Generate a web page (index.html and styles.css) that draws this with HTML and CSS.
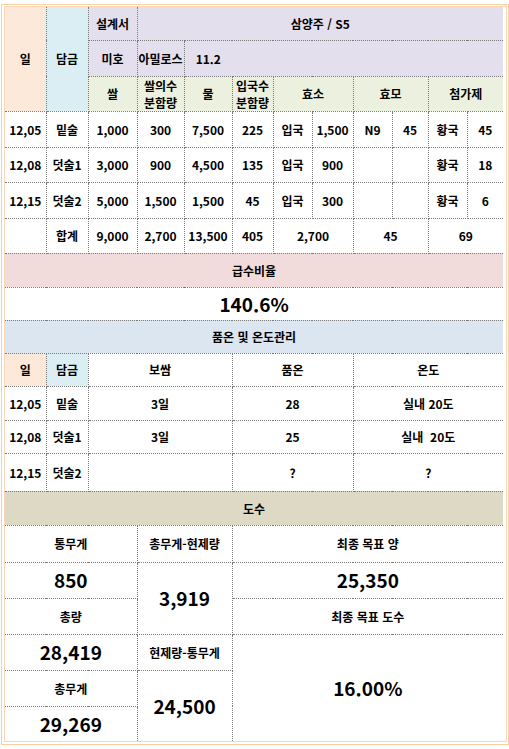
FILE: index.html
```html
<!DOCTYPE html>
<html lang="ko">
<head>
  <meta charset="UTF-8">
  <meta name="viewport" content="width=device-width, initial-scale=1.0">
  <title>삼양주 S5 담금 기록</title>
  <link rel="stylesheet" href="styles.css">
</head>
<body>
  <div class="frame">
    <div class="sheet-wrap">
      <table class="sheet">
        <colgroup>
          <col><col><col><col><col><col><col><col><col><col><col><col>
        </colgroup>

        <!-- 설계서 -->
        <tr class="h33">
          <td rowspan="3" class="peach">일</td>
          <td rowspan="3" class="aqua">담금</td>
          <td class="lav">설계서</td>
          <td colspan="9" class="lav">삼양주 / S5</td>
        </tr>
        <tr class="h36">
          <td class="lav">미호</td>
          <td class="lav">아밀로스</td>
          <td class="lav">11.2</td>
          <td colspan="7" class="lav no-left"></td>
        </tr>
        <tr class="h35">
          <td class="green">쌀</td>
          <td class="green">쌀의수<br>분함량</td>
          <td class="green">물</td>
          <td class="green">입국수<br>분함량</td>
          <td colspan="2" class="green">효소</td>
          <td colspan="2" class="green">효모</td>
          <td colspan="2" class="green">첨가제</td>
        </tr>
        <tr class="h36">
          <td>12,05</td><td>밑술</td><td>1,000</td><td>300</td><td>7,500</td><td>225</td>
          <td>입국</td><td>1,500</td><td>N9</td><td>45</td><td>황국</td><td>45</td>
        </tr>
        <tr class="h35">
          <td>12,08</td><td>덧술1</td><td>3,000</td><td>900</td><td>4,500</td><td>135</td>
          <td>입국</td><td>900</td><td></td><td></td><td>황국</td><td>18</td>
        </tr>
        <tr class="h36">
          <td>12,15</td><td>덧술2</td><td>5,000</td><td>1,500</td><td>1,500</td><td>45</td>
          <td>입국</td><td>300</td><td></td><td></td><td>황국</td><td>6</td>
        </tr>
        <tr class="h35">
          <td></td><td>합계</td><td>9,000</td><td>2,700</td><td>13,500</td><td>405</td>
          <td colspan="2">2,700</td><td colspan="2">45</td><td colspan="2">69</td>
        </tr>

        <!-- 급수비율 -->
        <tr class="h34">
          <td colspan="12" class="pink">급수비율</td>
        </tr>
        <tr class="h33">
          <td colspan="12" class="big">140.6%</td>
        </tr>

        <!-- 품온 및 온도관리 -->
        <tr class="h33">
          <td colspan="12" class="blue">품온 및 온도관리</td>
        </tr>
        <tr class="h33">
          <td class="peach">일</td>
          <td class="aqua">담금</td>
          <td colspan="3">보쌈</td>
          <td colspan="3">품온</td>
          <td colspan="4">온도</td>
        </tr>
        <tr class="h34">
          <td>12,05</td><td>밑술</td><td colspan="3">3일</td><td colspan="3">28</td><td colspan="4">실내 20도</td>
        </tr>
        <tr class="h33">
          <td>12,08</td><td>덧술1</td><td colspan="3">3일</td><td colspan="3">25</td><td colspan="4">실내&nbsp; 20도</td>
        </tr>
        <tr class="h38">
          <td>12,15</td><td>덧술2</td><td colspan="3"></td><td colspan="3">?</td><td colspan="4">?</td>
        </tr>

        <!-- 도수 -->
        <tr class="h34">
          <td colspan="12" class="tan">도수</td>
        </tr>
        <tr class="h37">
          <td colspan="3">통무게</td>
          <td colspan="2">총무게-현제량</td>
          <td colspan="7">최종 목표 양</td>
        </tr>
        <tr class="h36">
          <td colspan="3" class="big">850</td>
          <td colspan="2" rowspan="2" class="big">3,919</td>
          <td colspan="7" class="big">25,350</td>
        </tr>
        <tr class="h36">
          <td colspan="3">총량</td>
          <td colspan="7">최종 목표 도수</td>
        </tr>
        <tr class="h36">
          <td colspan="3" class="big">28,419</td>
          <td colspan="2">현제량-통무게</td>
          <td colspan="7" rowspan="3" class="big">16.00%</td>
        </tr>
        <tr class="h36">
          <td colspan="3">총무게</td>
          <td colspan="2" rowspan="2" class="big">24,500</td>
        </tr>
        <tr class="h35">
          <td colspan="3" class="big">29,269</td>
        </tr>
      </table>
    </div>
  </div>
</body>
</html>
```

FILE: styles.css
```css
body {
  margin: 4px 0 0 1px;
  font-family: "Noto Sans CJK KR", "Noto Sans", sans-serif;
  color: #000;
}
.frame {
  width: 503px;
  border: 1px solid #f9cfa6;
  padding: 1px 1px 2px 2px;
}
.sheet-wrap {
  border: 1px solid #fad7b6;
}
.sheet {
  width: 498px;
  table-layout: fixed;
  border-collapse: collapse;
  border-style: hidden;
}
.sheet col:nth-child(1) { width: 41px; }
.sheet col:nth-child(2) { width: 42px; }
.sheet col:nth-child(3) { width: 49px; }
.sheet col:nth-child(4) { width: 47px; }
.sheet col:nth-child(5) { width: 48px; }
.sheet col:nth-child(6) { width: 41px; }
.sheet col:nth-child(7) { width: 39px; }
.sheet col:nth-child(8) { width: 41px; }
.sheet col:nth-child(9) { width: 39px; }
.sheet col:nth-child(10) { width: 36px; }
.sheet col:nth-child(11) { width: 39px; }
.sheet col:nth-child(12) { width: 36px; }

.sheet td {
  border: 1px dotted #7a7a7a;
  padding: 0;
  text-align: center;
  vertical-align: middle;
  font-size: 12px;
  font-weight: bold;
  line-height: 17px;
  white-space: nowrap;
  overflow: visible;
}
.sheet td.no-left {
  border-left-style: hidden;
}
.sheet td.big {
  font-size: 19px;
  line-height: 24px;
}

.h33 { height: 33px; }
.h34 { height: 34px; }
.h35 { height: 35px; }
.h36 { height: 36px; }
.h37 { height: 37px; }
.h38 { height: 38px; }

.peach { background-color: #fde9d9; }
.aqua { background-color: #daeef3; }
.lav { background-color: #e4dfec; }
.green { background-color: #ebf1de; }
.pink { background-color: #f2dcdb; }
.blue { background-color: #dce6f1; }
.tan { background-color: #ddd9c4; }
```
